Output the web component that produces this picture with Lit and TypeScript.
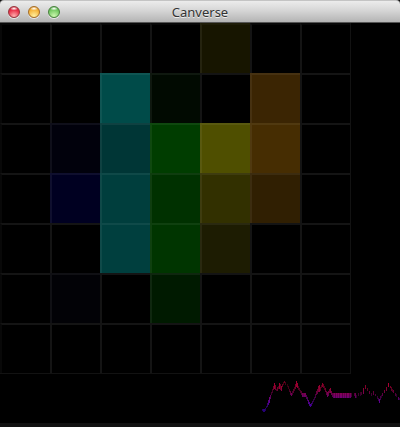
import { LitElement, html, css, svg } from "lit";
import { customElement, property } from "lit/decorators.js";

const COLUMNS = 7;
const ROWS = 7;

// Lit cells, keyed "row,column".
const LIT: Record<string, string> = {
  "0,4": "#171500",
  "1,2": "#004b49",
  "1,3": "#010a01",
  "1,5": "#3b2503",
  "2,1": "#01010c",
  "2,2": "#003636",
  "2,3": "#003d00",
  "2,4": "#4f4f00",
  "2,5": "#462d02",
  "3,1": "#000021",
  "3,2": "#003e3d",
  "3,3": "#003100",
  "3,4": "#323000",
  "3,5": "#301f02",
  "4,2": "#003f3e",
  "4,3": "#003500",
  "4,4": "#1d1c02",
  "5,1": "#020206",
  "5,3": "#001a00",
};

// Waveform samples: x, top, height, strength.
const SAMPLES: number[][] = [
  [2, 29, 2, 0.7], [3, 29, 3, 0.9], [4, 29, 3, 0.9], [5, 28, 3, 0.7], [6, 26, 2, 0.6],
  [7, 23, 4, 0.7], [8, 20, 5, 0.9], [9, 17, 6, 1], [10, 15, 4, 0.8], [11, 12, 3, 0.5],
  [12, 9, 4, 0.5], [13, 6, 4, 0.7], [14, 3, 6, 0.9], [15, 5, 5, 0.7], [16, 9, 2, 0.5],
  [17, 7, 4, 0.7], [18, 6, 3, 0.5], [19, 3, 6, 0.9], [20, 4, 6, 0.6], [21, 6, 5, 0.9],
  [22, 4, 3, 0.6], [23, 2, 3, 0.4], [24, 1, 2, 0.6], [25, 2, 3, 0.4], [27, 4, 3, 0.3],
  [28, 6, 3, 0.4], [29, 9, 3, 0.5], [30, 11, 4, 0.7], [31, 13, 3, 0.9], [32, 11, 4, 0.5],
  [33, 9, 4, 0.6], [34, 7, 4, 0.5], [35, 4, 5, 0.7], [36, 1, 6, 0.9], [37, 3, 5, 0.9],
  [38, 6, 4, 0.5], [39, 8, 3, 0.5], [40, 10, 3, 0.5], [41, 11, 4, 0.6], [42, 13, 4, 0.9],
  [43, 13, 4, 0.8], [44, 13, 4, 0.9], [45, 13, 4, 0.9], [46, 15, 4, 0.7], [47, 17, 4, 0.7],
  [48, 20, 4, 0.9], [49, 22, 4, 0.9], [50, 24, 3, 1], [51, 23, 3, 0.8], [52, 21, 3, 0.6],
  [53, 19, 3, 0.5], [54, 17, 3, 0.5], [55, 14, 4, 0.6], [56, 11, 4, 0.7], [57, 9, 5, 0.7],
  [58, 6, 6, 0.8], [59, 5, 7, 0.9], [60, 7, 4, 0.6], [61, 5, 3, 0.5], [62, 3, 4, 0.8],
  [63, 4, 4, 0.6], [64, 6, 4, 0.5], [65, 8, 4, 0.7], [66, 11, 4, 0.7], [67, 12, 5, 0.9],
  [68, 11, 5, 0.8], [69, 9, 4, 0.7], [70, 8, 5, 0.9], [71, 11, 4, 0.8], [72, 13, 4, 0.7],
  [73, 13, 5, 0.8], [74, 13, 5, 1], [75, 13, 5, 0.7], [76, 13, 5, 1], [77, 13, 5, 0.8],
  [78, 13, 5, 1], [79, 13, 5, 0.7], [80, 13, 5, 1], [81, 13, 5, 1], [82, 13, 5, 0.7],
  [83, 13, 5, 1], [84, 13, 5, 0.8], [85, 13, 5, 1], [86, 13, 5, 0.7], [87, 13, 5, 1],
  [88, 13, 5, 1], [89, 13, 5, 0.7], [90, 13, 5, 0.9], [91, 13, 4, 0.5], [94, 13, 3, 0.6],
  [95, 13, 5, 0.8], [96, 15, 3, 0.4], [98, 13, 3, 0.5], [100, 12, 4, 0.4], [101, 12, 3, 0.5],
  [103, 8, 6, 0.9], [105, 5, 4, 0.8], [107, 8, 3, 0.6], [109, 11, 3, 0.7], [111, 13, 3, 0.5],
  [113, 11, 4, 0.7], [115, 14, 2, 0.6], [117, 16, 3, 0.5], [118, 18, 3, 0.6], [119, 19, 4, 1],
  [120, 16, 4, 0.6], [121, 15, 3, 0.4], [122, 13, 3, 0.7], [124, 10, 3, 0.8], [126, 7, 4, 0.8],
  [128, 3, 4, 1], [130, 6, 2, 0.7], [131, 7, 4, 0.6], [132, 9, 3, 0.5], [133, 10, 3, 0.7],
  [135, 13, 3, 0.6], [136, 14, 3, 0.4], [138, 17, 3, 0.8], [139, 18, 2, 0.5],
];

@customElement("title-bar")
export class TitleBar extends LitElement {
  @property() label = "";

  static styles = css`
    :host {
      display: grid;
      grid-template-columns: 1fr auto 1fr;
      align-items: center;
      box-sizing: border-box;
      height: 23px;
      padding: 0 8px;
      border-top: 1px solid #c4c4c4;
      border-bottom: 1px solid #555;
      border-radius: 4px 4px 0 0;
      background: linear-gradient(#ececec, #d6d6d6 45%, #b4b4b4);
    }
    .lights {
      display: flex;
      gap: 8px;
      padding-top: 1px;
    }
    .light {
      width: 12px;
      height: 12px;
      padding: 0;
      border: 1px solid;
      border-radius: 50%;
      box-shadow: 0 1px 0 #e8e8e8;
    }
    .close {
      border-color: #97323a;
      background: radial-gradient(ellipse 4px 2px at 50% 15%, #fff, #fff0),
        radial-gradient(circle at 50% 90%, #ffb0b0, #e9334a 60%, #c41f2e);
    }
    .minimize {
      border-color: #a56c26;
      background: radial-gradient(ellipse 4px 2px at 50% 15%, #fff, #fff0),
        radial-gradient(circle at 50% 90%, #fff0a0, #f6b73f 60%, #d88618);
    }
    .expand {
      border-color: #47803c;
      background: radial-gradient(ellipse 4px 2px at 50% 15%, #fff, #fff0),
        radial-gradient(circle at 50% 90%, #cdf8b0, #79cb66 60%, #449f3c);
    }
    .title {
      margin: 0;
      font: 400 13px/20px "Noto Sans", "Open Sans", sans-serif;
      color: #333;
      text-shadow: 0 1px 0 #eee;
    }
  `;

  render() {
    return html`
      <div class="lights">
        <button class="light close" aria-label="Close"></button>
        <button class="light minimize" aria-label="Minimize"></button>
        <button class="light expand" aria-label="Zoom"></button>
      </div>
      <h1 class="title">${this.label}</h1>
    `;
  }
}

@customElement("color-grid")
export class ColorGrid extends LitElement {
  static styles = css`
    :host {
      display: block;
    }
    .grid {
      display: grid;
      grid-template-columns: repeat(7, 50px);
      grid-auto-rows: 50px;
      width: max-content;
      border-right: 1px solid #121212;
      border-bottom: 1px solid #121212;
    }
    .cell {
      border-top: 2px solid rgba(255, 255, 255, 0.08);
      border-left: 2px solid rgba(255, 255, 255, 0.08);
    }
    .cell.lit {
      border-color: rgba(255, 255, 255, 0.06);
    }
    .cell.top {
      border-top-color: rgba(255, 255, 255, 0.03);
    }
    .cell.first {
      border-left-color: rgba(255, 255, 255, 0.03);
    }
  `;

  render() {
    return html`<div class="grid">
      ${Array.from({ length: ROWS * COLUMNS }, (_, i) => {
        const row = Math.floor(i / COLUMNS);
        const column = i % COLUMNS;
        const color = LIT[`${row},${column}`];
        return html`<div
          class="cell ${color ? "lit" : ""} ${row === 0 ? "top" : ""} ${column === 0 ? "first" : ""}"
          style="background-color:${color ?? "#000"}"
        ></div>`;
      })}
    </div>`;
  }
}

@customElement("wave-trace")
export class WaveTrace extends LitElement {
  static styles = css`
    :host {
      display: block;
    }
    .wave {
      display: block;
      width: 140px;
      height: 43px;
    }
  `;

  render() {
    return html`<svg class="wave" viewBox="0 0 140 43" shape-rendering="crispEdges" aria-hidden="true">
      <defs>
        <linearGradient id="pitch" gradientUnits="userSpaceOnUse" x1="0" y1="0" x2="0" y2="34">
          <stop offset="0" stop-color="#b80030" />
          <stop offset="0.25" stop-color="#a00038" />
          <stop offset="0.45" stop-color="#7c0064" />
          <stop offset="0.7" stop-color="#50009c" />
          <stop offset="1" stop-color="#180078" />
        </linearGradient>
      </defs>
      ${SAMPLES.map(
        ([x, y, h, strength]) =>
          svg`<rect x=${x} y=${y} width="1" height=${h} fill="url(#pitch)" fill-opacity=${strength} />`
      )}
    </svg>`;
  }
}

@customElement("app-root")
export class AppRoot extends LitElement {
  static styles = css`
    :host {
      display: flex;
      flex-direction: column;
      min-height: 100vh;
      background: #111;
    }
    .canvas {
      flex: 1;
      display: flex;
      flex-direction: column;
      justify-content: space-between;
      margin-bottom: 4px;
      background: #000;
    }
    .trace {
      align-self: flex-end;
    }
  `;

  render() {
    return html`
      <title-bar label="Canverse"></title-bar>
      <main class="canvas">
        <color-grid></color-grid>
        <wave-trace class="trace"></wave-trace>
      </main>
    `;
  }
}
